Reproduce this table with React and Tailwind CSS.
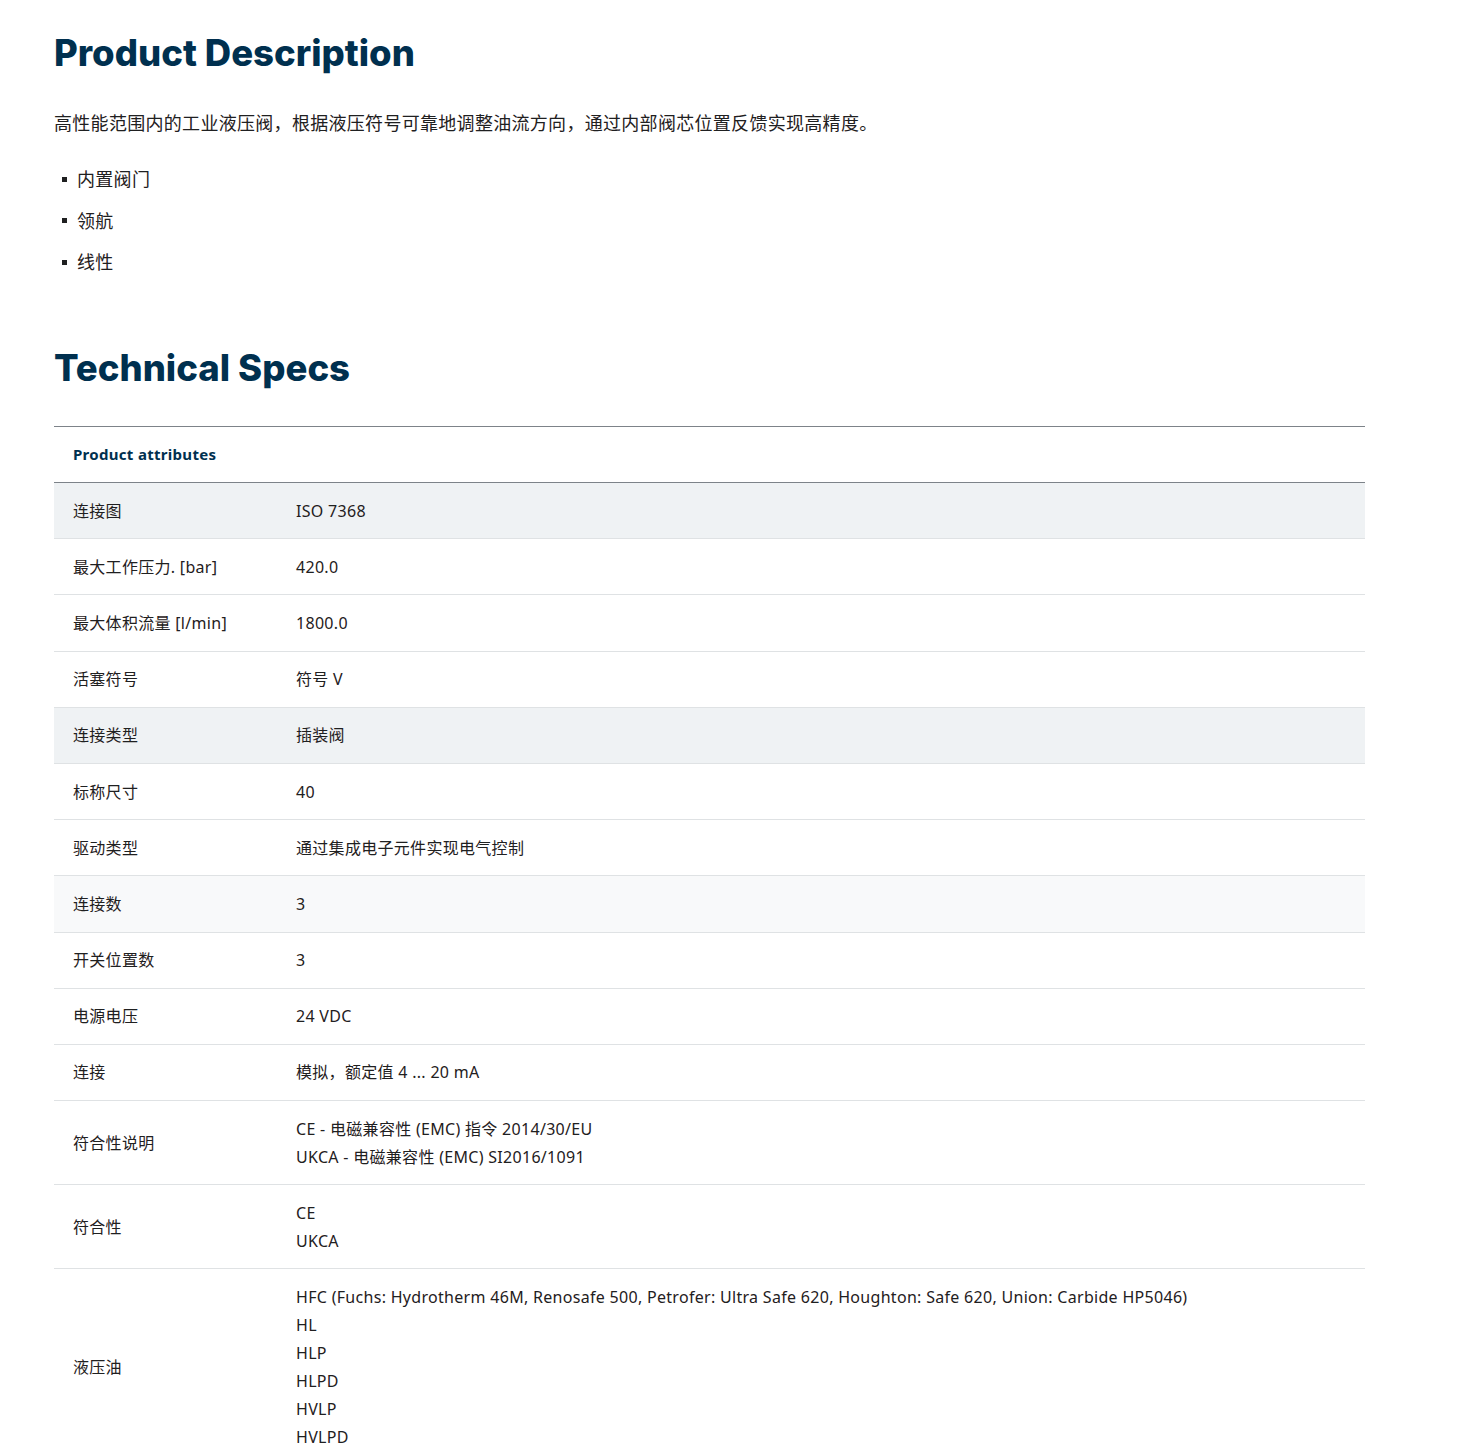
import React from "react";

const specs = [
  { label: "连接图", values: ["ISO 7368"], tone: "bg-[#eff2f4]" },
  { label: "最大工作压力. [bar]", values: ["420.0"] },
  { label: "最大体积流量 [l/min]", values: ["1800.0"] },
  { label: "活塞符号", values: ["符号 V"] },
  { label: "连接类型", values: ["插装阀"], tone: "bg-[#eff2f4]" },
  { label: "标称尺寸", values: ["40"] },
  { label: "驱动类型", values: ["通过集成电子元件实现电气控制"] },
  { label: "连接数", values: ["3"], tone: "bg-[#f8f9fa]" },
  { label: "开关位置数", values: ["3"] },
  { label: "电源电压", values: ["24 VDC"] },
  { label: "连接", values: ["模拟，额定值 4 ... 20 mA"] },
  {
    label: "符合性说明",
    values: ["CE - 电磁兼容性 (EMC) 指令 2014/30/EU", "UKCA - 电磁兼容性 (EMC) SI2016/1091"],
  },
  { label: "符合性", values: ["CE", "UKCA"] },
  {
    label: "液压油",
    values: [
      "HFC (Fuchs: Hydrotherm 46M, Renosafe 500, Petrofer: Ultra Safe 620, Houghton: Safe 620, Union: Carbide HP5046)",
      "HL",
      "HLP",
      "HLPD",
      "HVLP",
      "HVLPD",
    ],
  },
];

const bullets = ["内置阀门", "领航", "线性"];

const fontStack = {
  fontFamily: '"Noto Sans", "Noto Sans CJK SC", sans-serif',
};

const headingFont = { fontFamily: "Inter, sans-serif" };

export default function App() {
  return (
    <div className="min-h-screen bg-white pl-[54px] pr-[96px] pt-[32px] tracking-[0.3px] text-[#1f2021]" style={fontStack}>
      {/* Product Description */}
      <h1 className="text-[36.5px] font-extrabold leading-[42px] tracking-normal text-[#00304f]" style={headingFont}>
        Product Description
      </h1>
      <p className="mt-[35px] text-[18px] leading-[28px]">
        高性能范围内的工业液压阀，根据液压符号可靠地调整油流方向，通过内部阀芯位置反馈实现高精度。
      </p>
      <ul className="mt-[28px] flex flex-col gap-[13.5px] pl-[8px]">
        {bullets.map((item) => (
          <li key={item} className="flex items-center gap-[10px] text-[18px] leading-[28px]">
            <span className="h-[5px] w-[5px] bg-[#1f2021]" />
            {item}
          </li>
        ))}
      </ul>

      {/* Technical Specs */}
      <h2 className="mt-[71px] text-[36.5px] font-extrabold leading-[42px] tracking-normal text-[#00304f]" style={headingFont}>
        Technical Specs
      </h2>
      <div className="mt-[37px] w-[1311px] border-t border-[#7d8389]">
        <div className="border-b border-[#7d8389] px-[19px] py-[14px] text-[15px] font-bold leading-[27px] text-[#00304f]">
          Product attributes
        </div>
        {specs.map((row) => (
          <div key={row.label} className={`flex items-center border-b border-[#dfe2e4] py-[13.6px] text-[16px] leading-[28px] ${row.tone || "bg-white"}`}>
            <div className="w-[242px] shrink-0 pl-[19px]">{row.label}</div>
            <div className="flex flex-1 flex-col">
              {row.values.map((value) => (
                <span key={value}>{value}</span>
              ))}
            </div>
          </div>
        ))}
      </div>
    </div>
  );
}
